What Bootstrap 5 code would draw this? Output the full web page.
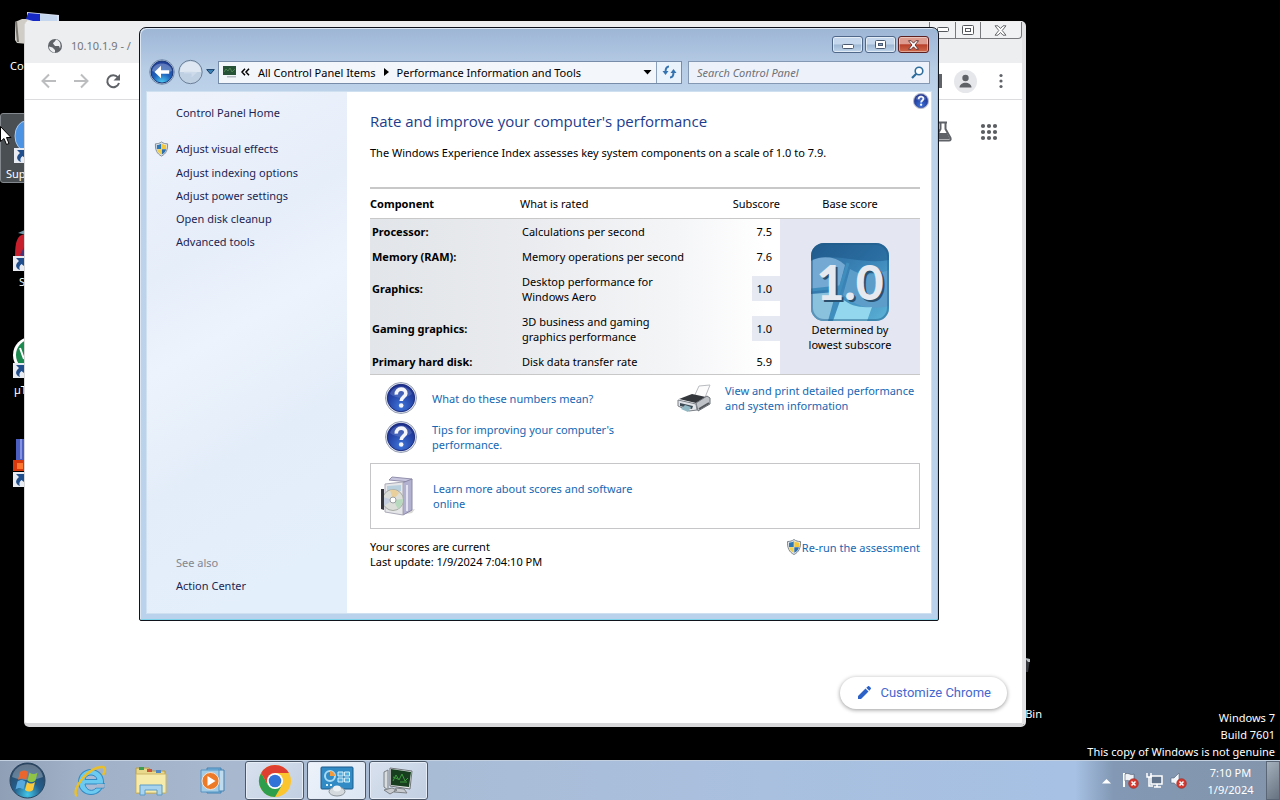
<!DOCTYPE html>
<html lang="en">
<head>
<meta charset="utf-8">
<meta name="viewport" content="width=device-width, initial-scale=1">
<title>Performance Information and Tools</title>
<link href="https://cdn.jsdelivr.net/npm/bootstrap@5.3.0/dist/css/bootstrap.min.css" rel="stylesheet">
<style>
body{background:#000;font:11px/15px "Noto Sans","Open Sans",sans-serif;color:#000;min-height:100vh;overflow:hidden}
a{text-decoration:none}
a:hover{text-decoration:underline}
svg{display:block;flex:none}
.desk-icon{position:absolute;left:0;width:60px;color:#fff}
.desk-icon svg{position:absolute;top:0;left:0}
.desk-icon span{position:absolute;white-space:nowrap}
.desk-icon.picked{border:1px solid #82888d;border-radius:3px;background:#4a4f54}
.bin{position:absolute;right:238px;top:655px;color:#fff}
.bin svg{margin-bottom:34px}
/* browser window */
.browser{position:absolute;left:24px;top:21px;right:254px;bottom:73px;background:#fff;border:1px solid #d5d5d5;border-width:1px 4px 4px 1px;border-color:#eee #e3e3e5 #d8d8da #d8d8d8;border-radius:5px}
.tabstrip{height:41px;background:#eceef0;border-radius:4px 4px 0 0}
.tab-title{color:#747679;padding:16px 0 0 22px}
.tab-title svg{margin-right:8px}
.cap-out{display:flex;border:1px solid #77797c;border-top:0;border-radius:0 0 4px 4px;height:17px;width:93px;background:#f1f2f3}
.cap-out button{border:0;background:none;padding:0;display:flex;align-items:center;justify-content:center}
.cap-out button+button{border-left:1px solid #77797c}
.toolbar{height:37px;border-bottom:1px solid #dcdcde;padding:0 9px 0 16px}
.plain{border:0;background:none;padding:0;display:flex}
.avatar{width:23px;height:23px;border-radius:50%;background:#e6e7ea;overflow:hidden}
.newtab-links{padding:21px 24px 0 0;gap:28px}
.customize{position:absolute;right:15px;bottom:14px;height:32px;border-radius:16px;border:0;background:#fff;color:#4468cf;font:13px/16px Roboto,sans-serif;padding:0 16px;box-shadow:0 1px 4px rgba(0,0,0,.4)}
/* control panel window */
.cp{position:absolute;left:139px;top:27px;right:341px;border:1px solid #10141c;border-radius:7px 7px 2px 2px;padding:0 6px 6px;background:linear-gradient(#9db6d4 0,#a6bedb 14px,#b7cce5 40px,#bdd3ea 66px,#bbd2ec 100%);box-shadow:inset 1px 1px #dbe7f4,inset -1px -1px #7fd3ea}
.cp-title{height:32px;padding:8px 3px 0 0;gap:2px}
.cap{width:31px;height:17px;padding:0;border:1px solid #50688a;border-radius:3px;background:linear-gradient(#c5d7ec 48%,#9eb7d4 52%,#bfd5ec);box-shadow:inset 0 0 0 1px rgba(255,255,255,.55);display:flex;align-items:center;justify-content:center}
.cap-close{border-color:#5c2020;background:linear-gradient(#dc9b8e 45%,#b8402b 52%,#cf6a4c);box-shadow:inset 0 0 0 1px rgba(255,255,255,.4)}
.addr-row{height:31px;padding:0 2px 7px 3px;gap:3px}
.addr{height:23px;border:1px solid #768ca8;background:#f3f6fb;color:#000}
.addr a{color:#000}
.addr .refresh{width:25px;height:21px;border:0;border-left:1px solid #8ba0ba;padding:0;background:#eaf2fb;display:flex;align-items:center;justify-content:center}
.find{width:242px;height:23px;border:1px solid #8498b4;background:#edf2fa;margin-left:3px;padding:0 5px 0 8px}
.find input{border:0;background:none;font:italic 11px/15px "Noto Sans",sans-serif;outline:0;width:100%;padding:0}
.find input::placeholder{color:#6d7178;opacity:1}
.cp-body{border:1px solid #cfe0f1;background:#fff}
.side{width:200px;flex:none;background:linear-gradient(150deg,#eff3fb 0,#e6eefa 30%,#edf3fc 45%,#e3edf9 65%,#e3f0fc 100%);padding:13px 0 20px 8px}
.side a{color:#1b1f52;padding-left:21px;display:block}
.side li{margin-bottom:8px;position:relative}
.side li:first-child{margin-bottom:9px}
.side li svg{position:absolute;left:-1px;top:0}
.side .home{margin-bottom:21px}
.see{color:#83868f;padding-left:21px;margin-bottom:8px}
.pane{padding:0 11px 44px 23px;position:relative}
.pane a{color:#1467b3}
.help{position:absolute;right:2px;top:1px}
.pane h1{font:15px/20px "Open Sans","Noto Sans",sans-serif;color:#1c3c8c;margin:19px 0 14px}
.scores{width:100%;border-top:2px solid #c8c8c8;border-bottom:1px solid #c8c8c8;margin:27px 0 0;border-collapse:collapse;table-layout:fixed}
.scores thead th{height:30px;border-bottom:1px solid #c8c8c8;font-weight:400;padding:0}
.scores thead th:first-child{font-weight:700}
.scores tbody{background:linear-gradient(90deg,#e2e5e9 0,#e9ebee 28%,#f4f5f7 55%,#fff 72%)}
.scores tbody th,.scores tbody td{padding:0 0 0 2px;height:25px;font-weight:400;vertical-align:middle}
.scores tbody th{font-weight:700}
.scores tbody .tall td{height:40px}
.scores tbody tr:last-child td{height:26px}
.scores .num{text-align:right}
.scores .num span{display:inline-block;line-height:25px;padding:0 8px 0 4px;vertical-align:middle}
.scores .low span{background:#e6e8f2}
.scores tbody td.base{background:#e4e6f1;padding:0;text-align:center}
.badge-tile{width:78px;height:78px;margin:3px auto 1px}
.tips{display:grid;grid-template-columns:47px 1fr 48px 195px;row-gap:7px;align-items:center;padding:7px 0 10px 15px}
.learn{border:1px solid #c6c6c8;height:66px;padding:0 9px;gap:17px}
.status{margin-top:10px}
/* taskbar */
.taskbar{position:absolute;left:0;right:0;bottom:0;height:40px;border-top:1px solid #c3d0e0;background:linear-gradient(90deg,#8f9fb5 0,#a0b0c6 6%,#a7b8cf 18%,#a9bcd6 34%,#a9c0df 60%,#a6c1e4 84%,#8298b4 87%,#8395ab 100%)}
.task{border:0;background:none;padding:0;width:61px;height:39px;display:flex;align-items:center;justify-content:center}
.task.open{width:59px;border:1px solid #4c5868;border-radius:3px;background:linear-gradient(135deg,#d8e1ee,#c1cfe2);box-shadow:inset 0 0 0 1px #e6edf6;margin-left:3px}
.task.cur{background:linear-gradient(135deg,#eef3fa,#dbe6f4)}
.tray{gap:7px;color:#fff}
.clock{width:57px;text-align:center;line-height:17px;padding-top:1px;margin-left:8px}
.peek{width:14px;height:39px;border:1px solid #5a6676;background:linear-gradient(135deg,#a5b0bd,#66727f);padding:0}
.watermark{position:absolute;right:5px;bottom:40px;color:#fff;text-align:right;line-height:17px}
.pointer{position:absolute;left:0;top:126px}
</style>
</head>
<body class="position-relative">
<svg width="0" height="0" class="position-absolute" aria-hidden="true">
<defs>
<radialGradient id="gHelp" cx=".5" cy=".8" r=".8"><stop offset="0" stop-color="#3f74d8"/><stop offset=".6" stop-color="#2443a6"/><stop offset="1" stop-color="#1c2c88"/></radialGradient>
<radialGradient id="gBack" cx=".5" cy="1" r=".9"><stop offset="0" stop-color="#4fd0f4"/><stop offset=".5" stop-color="#1f62bd"/><stop offset="1" stop-color="#20409a"/></radialGradient>
<linearGradient id="gTile" x1="0" y1="0" x2="1" y2="1"><stop offset="0" stop-color="#2a6496"/><stop offset=".5" stop-color="#3b85b8"/><stop offset="1" stop-color="#5cb4d8"/></linearGradient>
<symbol id="shield" viewBox="0 0 16 16"><path d="M8 .5C6 2 4 2.500 1.500 2.500 1.300 9 3 13 8 15.500 13 13 14.700 9 14.500 2.500 12 2.500 10 2 8 .5z" fill="#e4e8ec" stroke="#7d8790"/><path d="M7.700 2.300C6 3.300 4.500 3.700 3 3.800V8h4.700z" fill="#2f78b8"/><path d="M8.300 2.300C10 3.300 11.500 3.700 13 3.800V8H8.300z" fill="#f4c83c"/><path d="M3.100 8.300h4.600v5.500C5 12.500 3.500 11 3.100 8.300z" fill="#f0d050"/><path d="M12.900 8.300H8.300v5.500c2.700-1.300 4.200-2.800 4.600-5.500z" fill="#2d6eae"/></symbol>
<symbol id="ask" viewBox="0 0 32 32"><circle cx="16" cy="16" r="15.500" fill="#e3e7f0" stroke="#98a0b4"/><circle cx="16" cy="16" r="13.700" fill="url(#gHelp)" stroke="#1d2d80"/><path d="M5 12C8 2 24 2 27 12 20 17 12 17 5 12z" fill="#8ea7dc" opacity=".3"/><path d="M11.300 12.600C11 5.500 21 5.500 20.800 11.600 20.700 15 16.300 15 16.200 19" fill="none" stroke="#f4f6fc" stroke-width="3.600"/><circle cx="16.200" cy="23.500" r="2.300" fill="#f4f6fc"/></symbol>
<symbol id="arrow-cut" viewBox="0 0 12 15"><path d="M0 0h12v15H0z" fill="#e8ecf2"/><path d="M3 2h8v8L8.500 8C6 10 6 12 7 14 2 12 2 8 6 5z" fill="#214f8e"/></symbol>
</defs>
</svg>

<main>
<!-- desktop shortcuts, partly behind the browser -->
<div class="desk-icon" style="top:11px"><svg width="60" height="36" viewBox="0 0 60 36"><path d="M15 11l7-3h6v25l-11-1-2-3z" fill="#cfcdc6"/><path d="M15 11l2 20h2l-2-21z" fill="#77746e"/><path d="M27 1l32 3v20H27z" fill="#d8e2f0"/><path d="M28 2l12 1v9l-14-4z" fill="#1729c4"/><path d="M40 3l17 2v7H40z" fill="#c5d6ef"/></svg><span style="left:10px;top:47px">Computer</span></div>
<div class="desk-icon picked" style="top:113px;height:70px"><svg width="60" height="60" viewBox="0 0 60 60"><ellipse cx="25" cy="22" rx="11" ry="15" fill="#4c93e4" stroke="#a9cdf3"/></svg><svg width="12" height="15" style="left:13px;top:34px"><use href="#arrow-cut"/></svg><span style="left:5px;top:52px">Support</span></div>
<div class="desk-icon" style="top:230px"><svg width="60" height="30" viewBox="0 0 60 30"><path d="M18 3l9-4v6z" fill="#6f98a8"/><path d="M15 27C15 12 17 5 25 4v23z" fill="#c81f2c"/><path d="M20 25l5-10v12z" fill="#46377c"/></svg><svg width="12" height="15" style="left:13px;top:26px"><use href="#arrow-cut"/></svg><span style="left:19px;top:44px">S</span></div>
<div class="desk-icon" style="top:335px"><svg width="60" height="40" viewBox="0 0 60 40"><circle cx="31" cy="20" r="18" fill="#fff"/><circle cx="32" cy="20" r="16" fill="#1c8a4e"/><path d="M20 13l4 11" stroke="#fff" stroke-width="2"/></svg><svg width="12" height="15" style="left:13px;top:28px"><use href="#arrow-cut"/></svg><span style="left:14px;top:47px">µTorrent</span></div>
<div class="desk-icon" style="top:439px"><svg width="60" height="40" viewBox="0 0 60 40"><path d="M16 0h12v22H16z" fill="#4c5fc0"/><path d="M21 0v20" stroke="#8593e0" stroke-width="2"/><path d="M13 21h14v11H13z" fill="#d8380c"/><path d="M17 24h6v6h-6z" fill="#ff7730"/></svg><svg width="12" height="15" style="left:13px;top:33px"><use href="#arrow-cut"/></svg></div>
<div class="bin"><svg width="8" height="17" viewBox="0 0 8 17"><path d="M0 3l5 1-2 13H0z" fill="#33363a"/><path d="M0 3l5 1v3H3z" fill="#b9bec3"/></svg>Bin</div>

<section class="browser" aria-label="Browser">
  <div class="tabstrip d-flex justify-content-between">
    <div class="tab-title d-flex align-items-start"><svg width="16" height="16" viewBox="0 0 16 16"><circle cx="8" cy="8" r="7" fill="#5f6368"/><path d="M2 8.500L5.500 9.500 8 12v2.500C5 14.500 2 12 2 8.500zM9 1.500C8 4 6.500 4 6 5.500L8 8h4l1 2.500C14.500 7 13 2.500 9 1.500z" fill="#eceef0"/></svg><span>10.10.1.9 - /</span></div>
    <div class="cap-out">
      <button style="width:26px" aria-label="Minimize"><svg width="12" height="6"><rect x=".5" y=".5" width="11" height="4" rx="1" fill="#fff" stroke="#55585c"/></svg></button>
      <button style="width:25px" aria-label="Maximize"><svg width="12" height="10"><rect x=".5" y=".5" width="11" height="9" rx="1" fill="#fff" stroke="#55585c"/><rect x="3.500" y="3.500" width="5" height="3" fill="#fff" stroke="#55585c"/></svg></button>
      <button style="width:42px" aria-label="Close"><svg width="13" height="11" viewBox="0 0 13 11"><path d="M1 .8h3L6.500 3.500 9 .8h3L8.200 5.500 12 10.200H9L6.500 7.500 4 10.200H1L4.800 5.500z" fill="#fff" stroke="#66696d"/></svg></button>
    </div>
  </div>
  <div class="toolbar d-flex align-items-center justify-content-between">
    <div class="d-flex gap-3">
      <button class="plain" aria-label="Back"><svg width="16" height="16" viewBox="0 0 16 16" fill="none" stroke="#bcbdbf" stroke-width="2"><path d="M15 8H2M8 1.500L1.500 8 8 14.500"/></svg></button>
      <button class="plain" aria-label="Forward"><svg width="16" height="16" viewBox="0 0 16 16" fill="none" stroke="#bcbdbf" stroke-width="2"><path d="M1 8h13M8 1.500L14.500 8 8 14.500"/></svg></button>
      <button class="plain" aria-label="Reload"><svg width="16" height="16" viewBox="0 0 16 16"><path d="M13 4.500A6 6 0 1 0 14 10" fill="none" stroke="#5f6368" stroke-width="2"/><path d="M15 1v6.500H8.500z" fill="#5f6368"/></svg></button>
    </div>
    <div class="d-flex align-items-center gap-2">
      <button class="plain me-1" aria-label="Side panel"><svg width="12" height="14"><rect width="12" height="14" fill="#5f6368"/></svg></button>
      <button class="plain avatar" aria-label="Profile"><svg width="23" height="23" viewBox="0 0 23 23" fill="#5f6368"><circle cx="11.500" cy="8" r="3.200"/><path d="M5.500 17.500c0-6.500 12-6.500 12 0z"/></svg></button>
      <button class="plain px-1 ms-1" aria-label="Menu"><svg width="16" height="16" viewBox="0 0 16 16" fill="#5f6368"><circle cx="8" cy="2.500" r="1.600"/><circle cx="8" cy="8" r="1.600"/><circle cx="8" cy="13.500" r="1.600"/></svg></button>
    </div>
  </div>
  <div class="newtab-links d-flex justify-content-end align-items-center">
    <a href="#" aria-label="Labs"><svg width="18" height="21" viewBox="0 0 18 21"><path d="M5 1.500h8M6.500 2v6L1.500 17c-.5 1.500 0 2.500 1.500 2.500h12c1.500 0 2-1 1.500-2.500l-5-9V2" fill="none" stroke="#5f6368" stroke-width="2"/><path d="M5 12h8l3 6H2z" fill="#5f6368"/></svg></a>
    <a href="#" aria-label="Apps"><svg width="18" height="18" viewBox="0 0 18 18" fill="#5a5d61"><circle cx="3" cy="3" r="2.100"/><circle cx="9" cy="3" r="2.100"/><circle cx="15" cy="3" r="2.100"/><circle cx="3" cy="9" r="2.100"/><circle cx="9" cy="9" r="2.100"/><circle cx="15" cy="9" r="2.100"/><circle cx="3" cy="15" r="2.100"/><circle cx="9" cy="15" r="2.100"/><circle cx="15" cy="15" r="2.100"/></svg></a>
  </div>
  <button class="customize d-flex align-items-center gap-2"><svg width="16" height="16" viewBox="0 0 16 16" fill="#2c62c8"><path d="M2 14v-3l7.500-7.500 3 3L5 14zM10.300 2.700L12 1.200c.4-.3.800-.3 1.200 0l1.600 1.600c.3.400.3.800 0 1.200l-1.500 1.700z"/></svg>Customize Chrome</button>
</section>

<section class="cp" aria-label="Performance Information and Tools">
  <div class="cp-title d-flex justify-content-end">
    <button class="cap" aria-label="Minimize"><svg width="12" height="6" class="mt-1"><rect x=".5" y=".5" width="11" height="4" rx="1" fill="#fff" stroke="#4b5a70"/></svg></button>
    <button class="cap" aria-label="Maximize"><svg width="12" height="9"><rect x=".5" y=".5" width="10" height="8" rx="1" fill="#fff" stroke="#4b5a70"/><rect x="3.500" y="3.500" width="4" height="2" fill="#8aa4c4" stroke="#4b5a70"/></svg></button>
    <button class="cap cap-close" aria-label="Close"><svg width="13" height="10" viewBox="0 0 13 11"><path d="M1 .8h3L6.500 3.500 9 .8h3L8.200 5.500 12 10.200H9L6.500 7.500 4 10.200H1L4.800 5.500z" fill="#fff" stroke="#5c3030"/></svg></button>
  </div>
  <div class="addr-row d-flex align-items-center">
    <button class="plain" aria-label="Back"><svg width="26" height="26" viewBox="0 0 26 26"><circle cx="13" cy="13" r="12.300" fill="#c9d8e8" stroke="#7088a8"/><circle cx="13" cy="13" r="11" fill="url(#gBack)" stroke="#1c3878"/><path d="M3 12C4 2 22 2 23 12 17 14 9 14 3 12z" fill="#fff" opacity=".28"/><path d="M5.500 13l6.500-6.300v4.500h8.200v3.600H12v4.500z" fill="#fff"/></svg></button>
    <button class="plain" aria-label="Forward"><svg width="25" height="26" viewBox="0 0 25 26"><circle cx="12.500" cy="13" r="11.700" fill="#bfd0e3" stroke="#6a7f98"/><path d="M2 13C2-1 23-1 23 13z" fill="#dfe8f2"/><path d="M19.500 13l-6 5.500v-4H6v-2h7.500" fill="#d2deeb" opacity=".7"/></svg></button>
    <button class="plain" aria-label="Recent pages"><svg width="9" height="6" viewBox="0 0 9 6"><path d="M.7.600h7.600L4.500 5z" fill="#3c84b8" stroke="#1d3f66"/></svg></button>
    <nav class="addr d-flex align-items-center flex-grow-1" aria-label="Address">
      <svg width="14" height="12" viewBox="0 0 14 12" class="ms-1"><path d="M0 0h13v9H0z" fill="#285238"/><path d="M1 6l2-3 2 2 2-3 2 4 3-3" stroke="#4c8450" fill="none"/><path d="M4 10h9v1.500H4z" fill="#b6bcc4"/></svg>
      <svg width="9" height="8" viewBox="0 0 9 8" class="ms-1"><path d="M4 .8L1 4l3 3.200M8 .8L5 4l3 3.200" fill="none" stroke="#000" stroke-width="1.500"/></svg>
      <a href="#" class="ms-2">All Control Panel Items</a>
      <svg width="5" height="8" viewBox="0 0 5 8" class="ms-2 me-2"><path d="M0 0l5 4-5 4z"/></svg>
      <a href="#">Performance Information and Tools</a>
      <button class="plain ms-auto me-1" aria-label="Previous locations"><svg width="9" height="5" viewBox="0 0 9 5"><path d="M.5 0h8l-4 4.500z"/></svg></button>
      <button class="refresh" aria-label="Refresh"><svg width="15" height="14" viewBox="0 0 15 14" fill="none" stroke="#3473b0" stroke-width="2"><path d="M7 1.500C4 1.500 3.500 4 3.500 7M8 12.500c3 0 3.500-2.500 3.500-5.500"/><path d="M.5 6h6l-3 4zM8.500 8h6l-3-4z" fill="#3473b0" stroke="none"/></svg></button>
    </nav>
    <form class="find d-flex align-items-center" role="search"><input type="text" placeholder="Search Control Panel" aria-label="Search Control Panel"><svg width="13" height="13" viewBox="0 0 13 13"><circle cx="8" cy="5" r="3.800" fill="#fff" stroke="#2e6c9c" stroke-width="1.600"/><path d="M5.300 7.700L1 12" stroke="#2e6c9c" stroke-width="2.200"/></svg></form>
  </div>
  <div class="cp-body d-flex">
    <aside class="side d-flex flex-column">
      <a class="home" href="#">Control Panel Home</a>
      <ul class="list-unstyled mb-auto">
        <li><svg width="15" height="16"><use href="#shield"/></svg><a href="#">Adjust visual effects</a></li>
        <li><a href="#">Adjust indexing options</a></li>
        <li><a href="#">Adjust power settings</a></li>
        <li><a href="#">Open disk cleanup</a></li>
        <li><a href="#">Advanced tools</a></li>
      </ul>
      <div class="see">See also</div>
      <a href="#">Action Center</a>
    </aside>
    <div class="pane flex-grow-1">
      <button class="plain help" aria-label="Help"><svg width="16" height="16"><use href="#ask"/></svg></button>
      <h1>Rate and improve your computer's performance</h1>
      <div>The Windows Experience Index assesses key system components on a scale of 1.0 to 7.9.</div>
      <table class="scores">
        <colgroup><col style="width:150px"><col><col style="width:60px"><col style="width:140px"></colgroup>
        <thead><tr><th scope="col">Component</th><th scope="col">What is rated</th><th scope="col" class="num">Subscore</th><th scope="col" class="text-center">Base score</th></tr></thead>
        <tbody>
          <tr><th scope="row">Processor:</th><td>Calculations per second</td><td class="num"><span>7.5</span></td>
            <td class="base" rowspan="5">
              <svg class="badge-tile" viewBox="0 0 78 78" role="img" aria-label="Base score 1.0"><defs><clipPath id="tile"><rect width="78" height="78" rx="13"/></clipPath></defs><g clip-path="url(#tile)"><path d="M0 0h78v78H0z" fill="url(#gTile)"/><path d="M0 18C12 11 25 14 34 22L28 45 0 47z" fill="#73a9d2"/><path d="M39 26c11 7 22 7 39 1v36c-18 4-33 1-46-11z" fill="#5c9dca"/><path d="M0 51l25-2-8 29H0z" fill="#8ac2de"/><path d="M30 55c10 8 18 10 31 9l-5 14H22z" fill="#92d7ee"/><path d="M0 47l28-3M37 20L19 78" stroke="#3f8dbd" stroke-width="3"/><path d="M0 0h78v17C50 22 25 9 0 17z" fill="#174f83" opacity=".45"/></g><rect x="1" y="1" width="76" height="76" rx="12" fill="none" stroke="#1f5b87" stroke-width="2" opacity=".45"/><text x="41" y="59" text-anchor="middle" font-family="Lato,sans-serif" font-weight="900" font-size="48" fill="#29506e">1.0</text><text x="39" y="57" text-anchor="middle" font-family="Lato,sans-serif" font-weight="900" font-size="48" fill="#e6e9f0">1.0</text></svg>
              Determined by<br>lowest subscore
            </td></tr>
          <tr><th scope="row">Memory (RAM):</th><td>Memory operations per second</td><td class="num"><span>7.6</span></td></tr>
          <tr class="tall"><th scope="row">Graphics:</th><td>Desktop performance for<br>Windows Aero</td><td class="num low"><span>1.0</span></td></tr>
          <tr class="tall"><th scope="row">Gaming graphics:</th><td>3D business and gaming<br>graphics performance</td><td class="num low"><span>1.0</span></td></tr>
          <tr><th scope="row">Primary hard disk:</th><td>Disk data transfer rate</td><td class="num"><span>5.9</span></td></tr>
        </tbody>
      </table>
      <div class="tips">
        <svg width="32" height="32"><use href="#ask"/></svg><a href="#">What do these numbers mean?</a>
        <svg width="34" height="30" viewBox="0 0 34 30"><path d="M17 14L22 3l11-1-6 15z" fill="#fcfcfd" stroke="#b9bcc0"/><path d="M2 16l13-5 14 3-10 6z" fill="#34373c"/><path d="M19 20l11-7 3 2v6l-12 7z" fill="#bfc3c8" stroke="#6d7278"/><path d="M1 17l18 4 1 6-8 1-11-5z" fill="#e1e4e8" stroke="#7b8087"/><path d="M3 20l13 3-1 3-12-3z" fill="#3f4b54"/><path d="M8 22l6 2-3 5-7-3z" fill="#8fb8c4"/><path d="M22 26l10-6" stroke="#53575c" stroke-width="2"/></svg>
        <a href="#">View and print detailed performance<br>and system information</a>
        <svg width="32" height="32"><use href="#ask"/></svg><a href="#">Tips for improving your computer's<br>performance.</a>
      </div>
      <div class="learn d-flex align-items-center">
        <svg width="36" height="40" viewBox="0 0 36 40"><path d="M27 35l8-2-3 4-12 2z" fill="#d7d7d4"/><path d="M9 4L12 1l20 2-2 3z" fill="#c8c6de" stroke="#9290ac"/><path d="M22 7l10-4v31l-9 5z" fill="#b3b1d0" stroke="#8a88a6"/><path d="M27 9v26" stroke="#e3e2f0" stroke-width="2"/><path d="M5 8l18-2v33L5 36z" fill="#e5e6e8" stroke="#aaa9b8"/><path d="M7 10l14-1v6H7z" fill="#b8cfdd"/><circle cx="13" cy="24" r="10.500" fill="#dcdfd9" stroke="#a6aaa3"/><path d="M13 24L10 14c4-1 7 0 9 3z" fill="#e8cf9c"/><path d="M13 24l5 9c3-3 5-6 5-10z" fill="#b7d9bd"/><path d="M13 24L4 30c-2-3-2-6-1-9z" fill="#c4cede"/><circle cx="13" cy="24" r="3" fill="#fff" stroke="#9c9fa4"/><path d="M1 13h3v21l-3-1z" fill="#34363a"/></svg>
        <a href="#">Learn more about scores and software<br>online</a>
      </div>
      <div class="status d-flex justify-content-between align-items-start">
        <div>Your scores are current<br>Last update: 1/9/2024 7:04:10 PM</div>
        <a href="#" class="d-flex align-items-center"><svg width="16" height="16"><use href="#shield"/></svg>Re-run the assessment</a>
      </div>
    </div>
  </div>
</section>

<div class="watermark">Windows 7<br>Build 7601<br>This copy of Windows is not genuine</div>
</main>

<footer class="taskbar d-flex justify-content-between">
  <div class="d-flex">
    <button class="task" aria-label="Start" style="width:59px"><svg width="37" height="37" viewBox="0 0 37 37" class="me-1"><defs><radialGradient id="orb" cx=".5" cy=".9" r=".85"><stop offset="0" stop-color="#42c7e8"/><stop offset=".45" stop-color="#245f8c"/><stop offset="1" stop-color="#28425f"/></radialGradient></defs><circle cx="18.500" cy="18.500" r="17.500" fill="url(#orb)" stroke="#294560"/><path d="M3 15C6-2 31-2 34 15 24 19 12 19 3 15z" fill="#fff" opacity=".28"/><path d="M11 10c3-2 5-2 8 0l-2 8c-3-2-5-2-8 0z" fill="#e9672e"/><path d="M20.500 10.500c3 2 5 2 8 0l-2 8c-3 2-5 2-8 0z" fill="#8fc446"/><path d="M8.500 19.500c3-2 5-2 8 0l-2 8c-3-2-5-2-8 0z" fill="#58a9dd"/><path d="M18 20c3 2 5 2 8 0l-2 8c-3 2-5 2-8 0z" fill="#fcc93c"/></svg></button>
    <button class="task" aria-label="Internet Explorer"><svg width="34" height="34" viewBox="0 0 34 34"><ellipse cx="18" cy="18" rx="13" ry="13" fill="#3189c3"/><ellipse cx="18" cy="18" rx="12" ry="12" fill="#6cc9f0"/><path d="M12 15.500c1-6 11-6 12 0zM12 20h19v-1 5h-8c-3 4-10 3-11-4z" fill="#a9bad2" stroke="#3189c3"/><path d="M24 20h7.500v3.500H23z" fill="#a6b7ce"/><path d="M4 32C-3 26 17 1 30 3c3 1 2 5 0 8" fill="none" stroke="#e9c02c" stroke-width="2.500"/></svg></button>
    <button class="task" aria-label="Explorer"><svg width="34" height="32" viewBox="0 0 34 32"><path d="M2 3h13l2 3h14v22H2z" fill="#e9d98c" stroke="#b49c4a"/><path d="M5 2h5v3H5z" fill="#3f9d52"/><path d="M13 4h5v3h-5z" fill="#cc5436"/><path d="M22 5h5v3h-5z" fill="#4f86c4"/><path d="M2 9h30v19H2z" fill="#f6ebaa" stroke="#cdb566"/><path d="M6 30V20h22v10h-5v-5H11v5z" fill="#a7d3ee" stroke="#5b9bc8"/></svg></button>
    <button class="task" aria-label="Media Player"><svg width="28" height="28" viewBox="0 0 28 28"><path d="M9 1h14v25H9z" fill="#79b5dd" stroke="#4482b4"/><path d="M20 3h6v21h-6z" fill="#bfdcee" stroke="#4482b4"/><path d="M3 3h18v22H3z" fill="#a2cbe6" stroke="#5794c2"/><circle cx="12.500" cy="14" r="8.500" fill="#ed7a26" stroke="#f3e2d4"/><path d="M9.500 9l8 5-8 5z" fill="#fff"/></svg></button>
    <button class="task open" aria-label="Chrome"><svg width="34" height="34" viewBox="0 0 34 34"><circle cx="17" cy="17" r="16" fill="#fbc530"/><path d="M3.140 9A16 16 0 0 1 30.860 9H17z" fill="#df3f30"/><path d="M3.140 9A16 16 0 0 0 17 33L24 21H10z" fill="#2f9e4c"/><path d="M3.140 9L10 21 17 9z" fill="#df3f30"/><circle cx="17" cy="17" r="8" fill="#fff"/><circle cx="17" cy="17" r="6.300" fill="#3172d8"/></svg></button>
    <button class="task open cur" aria-label="Control Panel"><svg width="34" height="32" viewBox="0 0 34 32"><rect x="1" y="2" width="32" height="22" rx="1" fill="#328bc4" stroke="#1d5a8c"/><circle cx="10" cy="11" r="5" fill="none" stroke="#a9dcf4" stroke-width="2"/><path d="M10 11V6a5 5 0 0 1 5 5z" fill="#f39a3c"/><path d="M18 7h5v4h-5zM24.500 7h5v4h-5zM18 13h5v4h-5zM24.500 13h5v4h-5z" fill="#56aede" stroke="#d2eefb"/><path d="M6 20h2M10 20h2" stroke="#d9f1fb" stroke-width="2"/><ellipse cx="17" cy="26.500" rx="8" ry="4.500" fill="#d4dade" stroke="#8e969d"/><ellipse cx="17" cy="23.500" rx="4" ry="3" fill="#edf1f4"/></svg></button>
    <button class="task open" aria-label="Performance Information"><svg width="34" height="30" viewBox="0 0 34 30"><path d="M2 6l4-2v20l-4-3z" fill="#d9dcdf" stroke="#7b8085"/><path d="M8 2l22 3-2 18-20-3z" fill="#e4e6e8" stroke="#707579"/><path d="M9 3l20 3-2 15-18-2z" fill="#173f1f"/><path d="M11 15l3-6 3 5 3-6 3 7 3-3M11 11l5 2M18 16h7" stroke="#3f9a3f" fill="none"/><path d="M14 22l8 1 3 4-13-1zM2 24l8-2 5 2-7 4z" fill="#c8ccd0" stroke="#7b8085"/></svg></button>
  </div>
  <div class="tray d-flex align-items-center">
    <button class="plain me-1" aria-label="Show hidden icons"><svg width="9" height="6"><path d="M4.500 1L9 5.500H0z" fill="#fff"/></svg></button>
    <svg width="17" height="17" viewBox="0 0 17 17"><path d="M2 1v14" stroke="#fff" stroke-width="2"/><path d="M3 2c4-2 5 2 9 0v7c-4 2-5-2-9 0z" fill="#eef2f6" stroke="#4a5668" stroke-width=".6"/><circle cx="11.500" cy="11.500" r="4.800" fill="#d63a30" stroke="#96271f" stroke-width=".6"/><path d="M9.500 9.500l4 4M13.500 9.500l-4 4" stroke="#fff" stroke-width="1.500"/></svg>
    <svg width="17" height="17" viewBox="0 0 17 17"><path d="M5 4h11v8H5z" fill="#62748c" stroke="#fff" stroke-width="1.500"/><path d="M8 15h7M11 12v3M1 1v4h4V1M3 5v9h4" stroke="#fff" stroke-width="1.500" fill="none"/></svg>
    <svg width="17" height="17" viewBox="0 0 17 17"><path d="M1 6h3l5-5v14l-5-4H1z" fill="#f3f6f9" stroke="#566478" stroke-width=".6"/><circle cx="11.500" cy="11.500" r="4.800" fill="#d63a30" stroke="#96271f" stroke-width=".6"/><path d="M9.500 9.500l4 4M13.500 9.500l-4 4" stroke="#fff" stroke-width="1.500"/></svg>
    <div class="clock">7:10 PM<br>1/9/2024</div>
    <button class="peek" aria-label="Show desktop"></button>
  </div>
</footer>
<svg class="pointer" width="12" height="20" viewBox="0 0 12 20" aria-hidden="true"><path d="M.5.500v15l3.500-3 2.500 6 2.500-1-2.500-6H11z" fill="#fff" stroke="#000"/></svg>
<script src="https://cdn.jsdelivr.net/npm/bootstrap@5.3.0/dist/js/bootstrap.bundle.min.js"></script>
</body>
</html>
